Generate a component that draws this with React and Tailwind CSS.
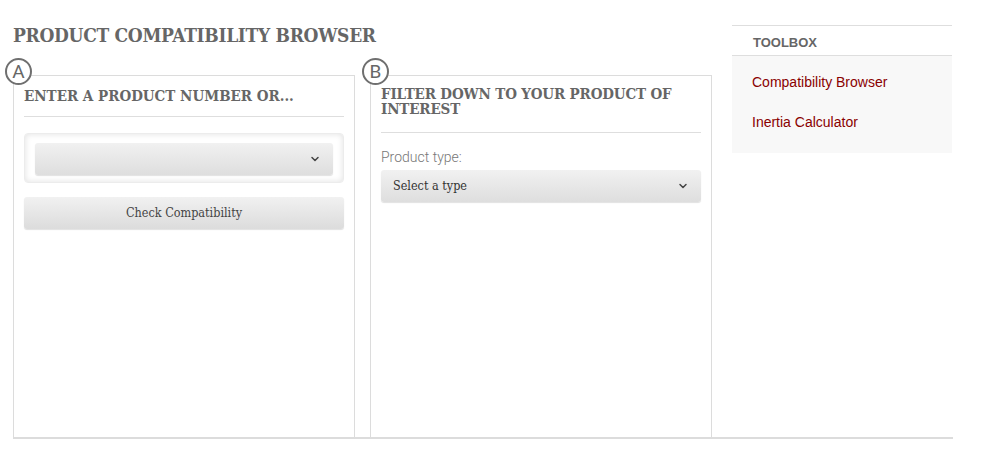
import { ChevronDown } from "lucide-react";

const slab = "font-['DejaVu_Serif_Condensed','DejaVu_Serif','Liberation_Serif',serif]";

function Badge({ letter }) {
  return (
    <div className="absolute -left-[9px] -top-[18px] w-[27px] h-[27px] rounded-full border-2 border-[#6f6f6f] bg-white flex items-center justify-center text-[19px] leading-none text-[#666] font-['Roboto',sans-serif]">
      {letter}
    </div>
  );
}

function SelectBox({ label, className = "" }) {
  return (
    <div
      className={`flex items-center justify-between h-[32px] px-3 rounded-[3px] bg-gradient-to-b from-[#f1f1f1] to-[#dedede] shadow-[0_1px_1px_rgba(0,0,0,0.12)] ${className}`}
    >
      <span className={`${slab} text-[12.5px] text-[#333]`}>{label}</span>
      <ChevronDown size={12} strokeWidth={3} className="text-[#444]" />
    </div>
  );
}

export default function App() {
  return (
    <div className="w-[990px] h-[455px] bg-white pl-[13px] pt-[22px]">
      <div className="flex w-[940px] border-b-2 border-[#dcdcdc]">
        {/* main */}
        <div className="flex flex-col w-[699px]">
          <h1 className={`${slab} font-bold text-[19px] text-[#666] leading-[26px] tracking-[-0.3px]`}>
            PRODUCT COMPATIBILITY BROWSER
          </h1>
          <div className="flex gap-[15px] mt-[27px]">
            {/* A */}
            <div className="relative w-[342px] h-[362px] border border-[#dcdcdc] border-b-0 px-[10px] pt-[11px]">
              <Badge letter="A" />
              <h2 className={`${slab} font-bold text-[15px] text-[#666] leading-[18px] pb-[11px] border-b border-[#dedede]`}>
                ENTER A PRODUCT NUMBER OR...
              </h2>
              <div className="mt-[16px] h-[50px] rounded-[4px] border border-[#ececec] shadow-[inset_0_0_6px_rgba(0,0,0,0.12)] p-[9px] px-[10px]">
                <SelectBox label="" />
              </div>
              <button
                className={`mt-[14px] w-full h-[32px] rounded-[3px] bg-gradient-to-b from-[#f1f1f1] to-[#dcdcdc] shadow-[0_1px_1px_rgba(0,0,0,0.12)] ${slab} text-[12.5px] text-[#444]`}
              >
                Check Compatibility
              </button>
            </div>
            {/* B */}
            <div className="relative w-[342px] h-[362px] border border-[#dcdcdc] border-b-0 px-[10px] pt-[11px]">
              <Badge letter="B" />
              <h2 className={`${slab} font-bold text-[15px] text-[#666] leading-[15px] pb-[15px] border-b border-[#dedede] tracking-[-0.15px]`}>
                FILTER DOWN TO YOUR PRODUCT OF INTEREST
              </h2>
              <div className="mt-[15px] font-['Roboto',sans-serif] font-light text-[14px] text-[#777] leading-[18px]">
                Product type:
              </div>
              <SelectBox label="Select a type" className="mt-[4px]" />
            </div>
          </div>
        </div>
        {/* toolbox */}
        <div className="ml-[20px] w-[220px] mt-[3px] self-start">
          <div className="border-t border-b border-[#dedede] h-[31px] pl-[21px] pt-[4px] flex items-center font-['Liberation_Sans',Arial,sans-serif] font-bold text-[13px] text-[#666]">
            TOOLBOX
          </div>
          <div className="bg-[#f8f8f8] pl-[20px] pt-[17px] pb-[22px] flex flex-col gap-[22px] font-['Liberation_Sans',Arial,sans-serif] text-[14px] text-[#8a0000] leading-[18px]">
            <span>Compatibility Browser</span>
            <span>Inertia Calculator</span>
          </div>
        </div>
      </div>
    </div>
  );
}
